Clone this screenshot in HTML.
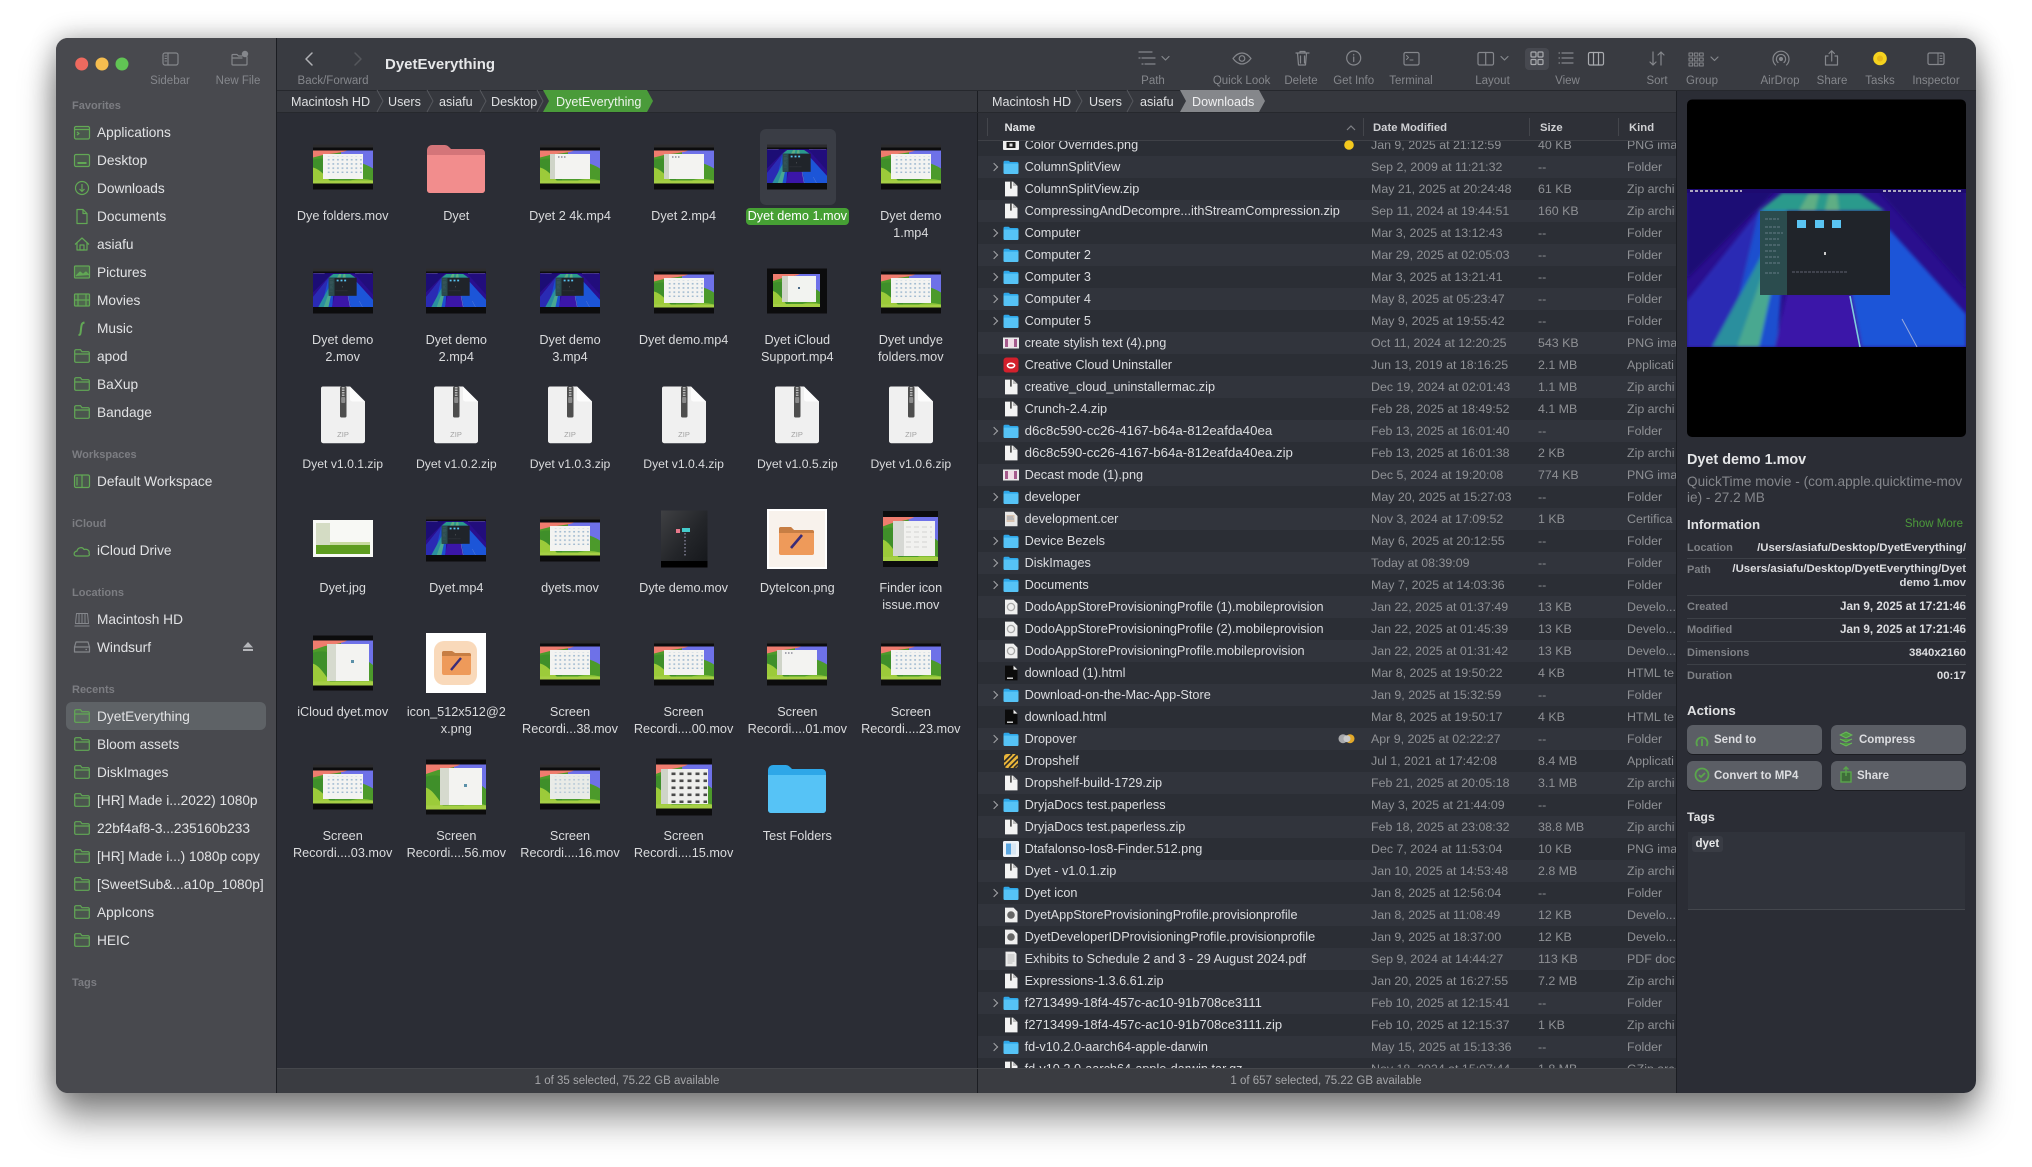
<!DOCTYPE html>
<html><head><meta charset="utf-8"><title>DyetEverything</title>
<style>
html,body{margin:0;padding:0;background:#fff;width:2032px;height:1167px;overflow:hidden;font-family:"Liberation Sans",sans-serif}
#w{position:absolute;left:55.5px;top:37.5px;width:1920.5px;height:1055.5px;overflow:hidden;border-radius:12px;box-shadow:0 26px 36px rgba(0,0,0,.42),0 0 26px rgba(0,0,0,.32)}
#c{position:absolute;left:-55.5px;top:-37.5px;width:2032px;height:1167px;background:#2b2d35}
.a{position:absolute}
.t{position:absolute;white-space:nowrap;line-height:16px;margin-top:1px}
.m{transform:translateX(-50%)}
.s{left:97px;font-size:13.7px;color:#e2e3e5}
.h{left:72px;font-size:11px;font-weight:bold;color:#7c7d82}
.l{font-size:11.5px;color:#85878c}
.p{font-size:12.6px;color:#dfe0e2;top:94px;margin-top:0}
#rows{position:absolute;left:978px;top:140px;width:698px;height:928px;overflow:hidden}
#in{margin-top:-6px}
.r{position:relative;height:22px;background:#2b2e35;font-size:12.7px;line-height:22px;color:#dcdde0;white-space:nowrap}
.r:nth-child(even){background:#31343c}
.r svg{position:absolute;left:25px;top:3px;width:16px;height:16px}
.r em,.r i,.r b,.r u{position:absolute;font-style:normal;font-weight:normal;text-decoration:none;top:0}
.r em{left:46.6px}
.r i{left:393px;font-size:12.4px;color:#8f9195}
.r b{left:560px;font-size:12.4px;color:#8f9195}
.r u{left:649px;font-size:12.4px;color:#8f9195}
.f::before{content:"";position:absolute;left:13px;top:8px;width:5px;height:5px;border-top:1.3px solid #a3a4a8;border-right:1.3px solid #a3a4a8;transform:rotate(45deg)}
.g{position:absolute;width:114px;height:100px;text-align:center}
.g svg{display:block;margin:0 auto;width:60px;height:60px;overflow:visible;filter:blur(.35px)}
.g div{position:absolute;left:0;right:0;top:71.8px;font-size:12.7px;line-height:17px;color:#dadbdd;white-space:nowrap}
.g.zp div{font-size:12.2px}
.ih{font-size:11.3px;font-weight:bold;color:#cfd0d3;top:119px}
.k{left:1687px;font-size:11px;font-weight:bold;color:#7f8186;margin-top:.5px}
.v{right:66px;font-size:11.4px;font-weight:bold;color:#dcdde0;text-align:right;margin-top:.5px}
.dt{font-size:11.7px}
.bt{position:absolute;height:29px;width:135px;background:#5b5e65;border-radius:6px;box-shadow:0 1px 0 rgba(0,0,0,.35)}
.bl{font-size:11.5px;font-weight:bold;color:#dcdde0}
.sep{position:absolute;left:1687px;width:279px;height:1px;background:#3d4047}
</style></head>
<body>
<svg width="0" height="0" style="position:absolute">
<defs>
<filter id="b1" x="-5%" y="-5%" width="110%" height="110%"><feGaussianBlur stdDeviation="1.6"/></filter>
<pattern id="dt" width="4.6" height="4.2" patternUnits="userSpaceOnUse"><rect x="1" y="1" width="1.8" height="1.5" fill="#9db8cf"/></pattern>
<pattern id="dk" width="8" height="7" patternUnits="userSpaceOnUse"><rect x="1.5" y="1.5" width="4" height="2.6" fill="#4a4a4a"/></pattern>
<symbol id="son" viewBox="0 0 60 33" preserveAspectRatio="none">
<rect width="60" height="33" fill="#4c9a2b"/>
<path d="M28 0H60V18C52 13 40 9 28 9z" fill="#6e71e8"/>
<path d="M0 0H34C30 2 20 3 12 4L0 7z" fill="#ef7c6e"/>
<path d="M0 9C8 7 16 8 22 11V33H0z" fill="#3f8f2a"/>
<path d="M0 33V17C8 19 13 27 20 33z" fill="#9ccb3a"/>
<path d="M30 33C40 28 50 27 60 30V33z" fill="#7fbc33"/>
<rect y="30" width="60" height="3" fill="#a6cf45"/>
</symbol>
<symbol id="pur" viewBox="0 0 279 158" preserveAspectRatio="none">
<rect width="279" height="158" fill="#2a0f8e"/>
<g filter="url(#b1)">
<path d="M0 0H90L0 90z" fill="#1f0a74"/><path d="M279 0H190L279 100z" fill="#220b7c"/>
<path d="M95 4H172L198 22H72z" fill="#2b9a8c"/>
<path d="M122 4H132L128 22H112zM142 4H150L152 22H138z" fill="#5fae84"/>
<path d="M0 112L72 22H100L90 158H0z" fill="#1a4fcf"/>
<path d="M0 158V112L72 22L40 158z" fill="#2a2ab4"/>
<path d="M25 158L78 60H96L60 158z" fill="#2a8f9e"/>
<path d="M50 158L76 84H88L72 158z" fill="#48a890"/>
<path d="M88 158L100 105H165L176 158z" fill="#3a12a8"/>
<path d="M202 40L279 125V158H175L165 105z" fill="#1a55d8"/>
</g>
<path d="M163 107L173 158" stroke="#7fd0dc" stroke-width="1.6"/>
<path d="M215 130L230 158" stroke="#9ad" stroke-width="1"/>
<rect x="73" y="22" width="130" height="84" fill="#20242a"/>
<rect x="73" y="22" width="27" height="84" fill="#2b4c4e"/>
<path d="M78 30h14M78 38h16M78 44h18M78 50h14M78 56h16M78 62h12M78 68h14M78 74h16M78 84h14" stroke="#9ab" stroke-width=".8" stroke-dasharray="3 1" opacity=".7"/>
<path d="M105 83h55" stroke="#778" stroke-width=".8" stroke-dasharray="3 1"/>
<path d="M110 31h9v8h-9zM128 31h9v8h-9zM145 31h9v8h-9z" fill="#5ac4f2"/>
<rect x="137" y="63" width="2" height="3" fill="#ccc"/>
<rect width="279" height="4" fill="#1d0a70"/>
<path d="M3 2h52M196 2h80" stroke="#ddd" stroke-width="1.6" stroke-dasharray="3 2"/>
</symbol>
<symbol id="tA" viewBox="0 0 60 60"><rect y="7.5" width="60" height="45" fill="#0c0c0d"/><rect y="7.5" width="60" height="3" fill="#2c2c2e"/><use href="#son" y="13.5" width="60" height="33"/><rect x="10" y="17" width="40" height="25" fill="#f3f3f1"/><rect x="12" y="19" width="37" height="17" fill="url(#dt)"/></symbol>
<symbol id="tB" viewBox="0 0 60 60"><rect y="7.5" width="60" height="45" fill="#0c0c0d"/><rect y="7.5" width="60" height="3" fill="#2c2c2e"/><use href="#son" y="13.5" width="60" height="33"/><rect x="10" y="17" width="40" height="25" fill="#f3f3f1"/><rect x="10" y="17" width="5" height="25" fill="#cfd4c8"/><path d="M18 20h1.5M21 20h1.5M24 20h1.5" stroke="#778" stroke-width="1.2"/></symbol>
<symbol id="tP" viewBox="0 0 60 60"><rect y="7.5" width="60" height="45" fill="#0c0c0d"/><rect y="7.5" width="60" height="3" fill="#2c2c2e"/><use href="#pur" y="12" width="60" height="34"/></symbol>
<symbol id="tI" viewBox="0 0 60 60"><rect y="7.5" width="60" height="45" fill="#0c0c0d"/><use href="#son" x="6" y="13" width="47" height="33"/><rect x="15" y="15" width="34" height="26" fill="#f2f3f0"/><rect x="15" y="15" width="6" height="26" fill="#cfd4c8"/><rect x="31" y="26" width="2" height="2" fill="#4a6a88"/></symbol>
<symbol id="tC" viewBox="0 0 60 60"><rect y="2.5" width="60" height="55" fill="#0c0c0d"/><use href="#son" y="7.5" width="60" height="45"/><rect x="14" y="11" width="42" height="37" fill="#f3f3f1"/><rect x="14" y="11" width="9" height="37" fill="#d6dace"/><rect x="38" y="27" width="3" height="3" fill="#5a90a8"/></symbol>
<symbol id="tJ" viewBox="0 0 60 60"><rect y="11" width="60" height="37" fill="#f8f9f5"/><rect x="3" y="14" width="14" height="28" fill="#d4dcc4"/><rect x="3" y="36" width="54" height="9" fill="#5e9d20"/><rect x="17" y="33" width="40" height="3" fill="#c8dba0"/></symbol>
<symbol id="tD" viewBox="0 0 60 60"><defs><linearGradient id="gd" x1="0" y1="0" x2="1" y2="1"><stop offset="0" stop-color="#3f4043"/><stop offset=".55" stop-color="#232529"/><stop offset="1" stop-color="#14161a"/></linearGradient></defs><rect x="7" y="1.5" width="46.5" height="57" fill="url(#gd)"/><rect x="7" y="52" width="46.5" height="6.5" fill="#000"/><rect x="22" y="20" width="4" height="4" fill="#e8788a"/><rect x="28" y="19" width="8" height="4" fill="#4cc"/><path d="M31 24v24" stroke="#667" stroke-width="2" stroke-dasharray="1.5 2"/></symbol>
<symbol id="tS" viewBox="0 0 60 60"><rect width="60" height="60" fill="#fff"/><rect x="8" y="8" width="43" height="44" rx="10" fill="#f9d9ba"/><path d="M16 20a2 2 0 0 1 2-2h8l3 2h14a2 2 0 0 1 2 2v18a2 2 0 0 1-2 2H18a2 2 0 0 1-2-2z" fill="#ee9a5a"/><path d="M16 23V20a2 2 0 0 1 2-2h8l3 2h14a2 2 0 0 1 2 2v1z" fill="#c77e44"/><path d="M25 37L35 25" stroke="#3a2c78" stroke-width="2.4"/></symbol>
<symbol id="tY" viewBox="0 0 60 60"><rect width="60" height="60" fill="#fff"/><rect x="2" y="2" width="56" height="56" fill="#f8f2ec"/><path d="M12 20a2 2 0 0 1 2-2h10l3 3h18a2 2 0 0 1 2 2v21a2 2 0 0 1-2 2H14a2 2 0 0 1-2-2z" fill="#ee9a5a"/><path d="M12 24V20a2 2 0 0 1 2-2h10l3 3h18a2 2 0 0 1 2 2v1z" fill="#c77e44"/><path d="M24 39L35 26" stroke="#3a2c78" stroke-width="2.6"/></symbol>
<symbol id="tF" viewBox="0 0 60 60"><rect x="2" y="2" width="55" height="56" fill="#0c0c0d"/><use href="#son" x="2" y="8" width="55" height="44"/><rect x="12" y="12" width="42" height="35" fill="#f1f1ef"/><rect x="12" y="12" width="11" height="35" fill="#d6d8d4"/><path d="M25 18h26M25 23h26M25 28h26M25 33h24M25 38h24" stroke="#c8c8c8" stroke-dasharray="5 3" stroke-width=".8"/></symbol>
<symbol id="tG" viewBox="0 0 60 60"><rect x="2" y="1.5" width="56" height="57" fill="#0c0c0d"/><use href="#son" x="2" y="7.5" width="56" height="44"/><rect x="7" y="12" width="47" height="35" fill="#eeeeec"/><rect x="7" y="12" width="7" height="35" fill="#cfd4c8"/><rect x="15" y="14" width="38" height="32" fill="url(#dk)"/></symbol>
<symbol id="tE" viewBox="0 0 60 60"><rect y="7.5" width="60" height="45" fill="#0c0c0d"/><rect y="7.5" width="60" height="3" fill="#2c2c2e"/><use href="#son" y="13.5" width="60" height="33"/><rect x="10" y="17" width="40" height="25" fill="#e9ebe7"/><rect x="12" y="19" width="38" height="17" fill="url(#dt)" opacity=".7"/></symbol>
<symbol id="zip" viewBox="0 0 60 60"><path d="M10 1.5H37L52 16.5V56a2.2 2.2 0 0 1-2.2 2.2H10.2A2.2 2.2 0 0 1 8 56V3.5A2 2 0 0 1 10 1.5z" fill="#f0f0f0"/><path d="M37 1.5V14a2.5 2.5 0 0 0 2.5 2.5H52z" fill="#fcfcfc"/><rect x="27" y="1.5" width="6.5" height="31" rx="1.5" fill="#4e4e4e"/><path d="M30.2 2v16" stroke="#b5b5b5" stroke-width="2.6" stroke-dasharray="1.5 1"/><rect x="28.2" y="12" width="4" height="6" rx="1" fill="#8b8b8b"/><text x="30" y="52" text-anchor="middle" font-family="Liberation Sans,sans-serif" font-size="7.5" fill="#a2a2a2">ZIP</text></symbol>
<symbol id="pf" viewBox="0 0 60 60"><path d="M1 13a5 5 0 0 1 5-5h12c3 0 4 1 6 3l1 1h30a4 4 0 0 1 4 4v37a3 3 0 0 1-3 3H4a3 3 0 0 1-3-3z" fill="#d47579"/><path d="M1 18h58v35a3 3 0 0 1-3 3H4a3 3 0 0 1-3-3z" fill="#f28d8d"/></symbol>
<symbol id="bf" viewBox="0 0 60 60"><path d="M1 13a5 5 0 0 1 5-5h12c3 0 4 1 6 3l1 1h30a4 4 0 0 1 4 4v37a3 3 0 0 1-3 3H4a3 3 0 0 1-3-3z" fill="#2ea7e8"/><path d="M1 18h58v35a3 3 0 0 1-3 3H4a3 3 0 0 1-3-3z" fill="#56c3f6"/></symbol>
<symbol id="lf" viewBox="0 0 16 16"><path d="M.5 3.2A1.5 1.5 0 0 1 2 1.7h3.6l1.6 1.3H14a1.5 1.5 0 0 1 1.5 1.5v9A1.4 1.4 0 0 1 14 15H2a1.4 1.4 0 0 1-1.5-1.5z" fill="#2ea7e8"/><path d="M.5 4.6h15v9A1.4 1.4 0 0 1 14 15H2a1.4 1.4 0 0 1-1.5-1.5z" fill="#56c3f6"/></symbol>
<symbol id="lz" viewBox="0 0 16 16"><path d="M2 .6h8L14.500 5v10.400H2z" fill="#f3f3f3"/><path d="M10 .6V5h4.500z" fill="#bdbdbd"/><rect x="7" y=".6" width="1.800" height="7" fill="#555"/></symbol>
<symbol id="lp" viewBox="0 0 16 16"><rect y="2.500" width="16" height="11" fill="#e9e9e9"/><rect x="2" y="4" width="12" height="8" fill="#a55a8c"/><rect x="5" y="4" width="6" height="8" fill="#f1dde6"/></symbol>
<symbol id="lo" viewBox="0 0 16 16"><rect y="3" width="16" height="10" rx="1" fill="#eee"/><rect x="3.500" y="5" width="9" height="6" fill="#1a1a1a"/><rect x="6.500" y="6.500" width="3" height="3" fill="#ddd"/></symbol>
<symbol id="lc" viewBox="0 0 16 16"><rect x=".5" y=".5" width="15" height="15" rx="3" fill="#d3202c"/><ellipse cx="8" cy="8.500" rx="3.600" ry="2.200" fill="none" stroke="#fff" stroke-width="1.600"/></symbol>
<symbol id="lr" viewBox="0 0 16 16"><path d="M2 .8h8.500L14.500 5v10.200H2z" fill="#e8e8e8"/><rect x="3.500" y="4" width="8" height="7" fill="#d9c3b0"/><path d="M4 6h6M4 8h7" stroke="#9ab" stroke-width="1"/></symbol>
<symbol id="lm" viewBox="0 0 16 16"><path d="M2 .6h8.500L14.500 4.600v10.800H2z" fill="#efefef"/><circle cx="8" cy="8" r="3.600" fill="none" stroke="#a8a8a8" stroke-width="1.300"/></symbol>
<symbol id="ln" viewBox="0 0 16 16"><path d="M2 .6h8.500L14.500 4.600v10.800H2z" fill="#efefef"/><circle cx="8" cy="8" r="3.800" fill="#666"/></symbol>
<symbol id="lh" viewBox="0 0 16 16"><path d="M2 .6h8.500L14.500 4.600v10.800H2z" fill="#0b0b0b"/><path d="M10.500 .6L14.500 4.600h-4z" fill="#eee"/><rect x="4" y="12.500" width="6" height="1.400" fill="#ddd"/></symbol>
<symbol id="ld" viewBox="0 0 16 16"><rect x="1" y="1" width="14" height="14" rx="3" fill="#e9b53a"/><path d="M1 9L9 1M1 14L14 1M6 15L15 6M11 15L15 11" stroke="#2a2a2a" stroke-width="1.600"/></symbol>
<symbol id="lg" viewBox="0 0 16 16"><rect width="16" height="16" rx="1.500" fill="#eef3f7"/><path d="M3 2.500h10v11H3z" fill="#5aa6e0"/><path d="M8 2.500h5v11H8z" fill="#d7e6f2"/></symbol>
<symbol id="lq" viewBox="0 0 16 16"><path d="M2.500 .6h9L13.500 2.600v12.800h-11z" fill="#ececec"/><path d="M4.500 4h7M4.500 6h7M4.500 8h7M4.500 10h7M4.500 12h5" stroke="#aaa" stroke-width=".8"/></symbol>
<g id="fo"><path d="M.7 3V12a1.300 1.300 0 0 0 1.300 1.300h12a1.300 1.300 0 0 0 1.300-1.300V4a1.300 1.300 0 0 0-1.300-1.300H8L6.500 .7H2A1.300 1.300 0 0 0 .7 2zM.7 5h14.600" fill="rgba(95,170,80,.12)" stroke="#62a855" stroke-width="1.200"/></g>
</defs>
</svg>

<div id="w"><div id="c">
<div class="a" style="left:55px;top:37px;width:221px;height:1057px;background:#48494e"></div>
<div class="a" style="left:277px;top:37px;width:1700px;height:53px;background:#393b41"></div>
<div class="a" style="left:277px;top:90px;width:1400px;height:22px;background:#36383e"></div>
<div class="a" style="left:277px;top:1068px;width:701px;height:26px;background:#3a3c41"></div>
<div class="a" style="left:978px;top:1068px;width:698px;height:26px;background:#3a3c41"></div>
<div class="a" style="left:978px;top:112px;width:698px;height:28px;background:#2e3037"></div>

<div id="rows"><div id="in">
<div class="r"><svg><use href="#lo"/></svg><em>Color Overrides.png</em><i>Jan 9, 2025 at 21:12:59</i><b>40 KB</b><u>PNG ima</u></div>
<div class="r f"><svg><use href="#lf"/></svg><em>ColumnSplitView</em><i>Sep 2, 2009 at 11:21:32</i><b>--</b><u>Folder</u></div>
<div class="r"><svg><use href="#lz"/></svg><em>ColumnSplitView.zip</em><i>May 21, 2025 at 20:24:48</i><b>61 KB</b><u>Zip archi</u></div>
<div class="r"><svg><use href="#lz"/></svg><em>CompressingAndDecompre...ithStreamCompression.zip</em><i>Sep 11, 2024 at 19:44:51</i><b>160 KB</b><u>Zip archi</u></div>
<div class="r f"><svg><use href="#lf"/></svg><em>Computer</em><i>Mar 3, 2025 at 13:12:43</i><b>--</b><u>Folder</u></div>
<div class="r f"><svg><use href="#lf"/></svg><em>Computer 2</em><i>Mar 29, 2025 at 02:05:03</i><b>--</b><u>Folder</u></div>
<div class="r f"><svg><use href="#lf"/></svg><em>Computer 3</em><i>Mar 3, 2025 at 13:21:41</i><b>--</b><u>Folder</u></div>
<div class="r f"><svg><use href="#lf"/></svg><em>Computer 4</em><i>May 8, 2025 at 05:23:47</i><b>--</b><u>Folder</u></div>
<div class="r f"><svg><use href="#lf"/></svg><em>Computer 5</em><i>May 9, 2025 at 19:55:42</i><b>--</b><u>Folder</u></div>
<div class="r"><svg><use href="#lp"/></svg><em>create stylish text (4).png</em><i>Oct 11, 2024 at 12:20:25</i><b>543 KB</b><u>PNG ima</u></div>
<div class="r"><svg><use href="#lc"/></svg><em>Creative Cloud Uninstaller</em><i>Jun 13, 2019 at 18:16:25</i><b>2.1 MB</b><u>Applicati</u></div>
<div class="r"><svg><use href="#lz"/></svg><em>creative_cloud_uninstallermac.zip</em><i>Dec 19, 2024 at 02:01:43</i><b>1.1 MB</b><u>Zip archi</u></div>
<div class="r"><svg><use href="#lz"/></svg><em>Crunch-2.4.zip</em><i>Feb 28, 2025 at 18:49:52</i><b>4.1 MB</b><u>Zip archi</u></div>
<div class="r f"><svg><use href="#lf"/></svg><em style="font-size:13.3px">d6c8c590-cc26-4167-b64a-812eafda40ea</em><i>Feb 13, 2025 at 16:01:40</i><b>--</b><u>Folder</u></div>
<div class="r"><svg><use href="#lz"/></svg><em style="font-size:13.3px">d6c8c590-cc26-4167-b64a-812eafda40ea.zip</em><i>Feb 13, 2025 at 16:01:38</i><b>2 KB</b><u>Zip archi</u></div>
<div class="r"><svg><use href="#lp"/></svg><em>Decast mode (1).png</em><i>Dec 5, 2024 at 19:20:08</i><b>774 KB</b><u>PNG ima</u></div>
<div class="r f"><svg><use href="#lf"/></svg><em>developer</em><i>May 20, 2025 at 15:27:03</i><b>--</b><u>Folder</u></div>
<div class="r"><svg><use href="#lr"/></svg><em>development.cer</em><i>Nov 3, 2024 at 17:09:52</i><b>1 KB</b><u>Certifica</u></div>
<div class="r f"><svg><use href="#lf"/></svg><em>Device Bezels</em><i>May 6, 2025 at 20:12:55</i><b>--</b><u>Folder</u></div>
<div class="r f"><svg><use href="#lf"/></svg><em>DiskImages</em><i>Today at 08:39:09</i><b>--</b><u>Folder</u></div>
<div class="r f"><svg><use href="#lf"/></svg><em>Documents</em><i>May 7, 2025 at 14:03:36</i><b>--</b><u>Folder</u></div>
<div class="r"><svg><use href="#lm"/></svg><em>DodoAppStoreProvisioningProfile (1).mobileprovision</em><i>Jan 22, 2025 at 01:37:49</i><b>13 KB</b><u>Develo...</u></div>
<div class="r"><svg><use href="#lm"/></svg><em>DodoAppStoreProvisioningProfile (2).mobileprovision</em><i>Jan 22, 2025 at 01:45:39</i><b>13 KB</b><u>Develo...</u></div>
<div class="r"><svg><use href="#lm"/></svg><em>DodoAppStoreProvisioningProfile.mobileprovision</em><i>Jan 22, 2025 at 01:31:42</i><b>13 KB</b><u>Develo...</u></div>
<div class="r"><svg><use href="#lh"/></svg><em>download (1).html</em><i>Mar 8, 2025 at 19:50:22</i><b>4 KB</b><u>HTML te</u></div>
<div class="r f"><svg><use href="#lf"/></svg><em>Download-on-the-Mac-App-Store</em><i>Jan 9, 2025 at 15:32:59</i><b>--</b><u>Folder</u></div>
<div class="r"><svg><use href="#lh"/></svg><em>download.html</em><i>Mar 8, 2025 at 19:50:17</i><b>4 KB</b><u>HTML te</u></div>
<div class="r f"><svg><use href="#lf"/></svg><em>Dropover</em><i>Apr 9, 2025 at 02:22:27</i><b>--</b><u>Folder</u></div>
<div class="r"><svg><use href="#ld"/></svg><em>Dropshelf</em><i>Jul 1, 2021 at 17:42:08</i><b>8.4 MB</b><u>Applicati</u></div>
<div class="r"><svg><use href="#lz"/></svg><em>Dropshelf-build-1729.zip</em><i>Feb 21, 2025 at 20:05:18</i><b>3.1 MB</b><u>Zip archi</u></div>
<div class="r f"><svg><use href="#lf"/></svg><em>DryjaDocs test.paperless</em><i>May 3, 2025 at 21:44:09</i><b>--</b><u>Folder</u></div>
<div class="r"><svg><use href="#lz"/></svg><em>DryjaDocs test.paperless.zip</em><i>Feb 18, 2025 at 23:08:32</i><b>38.8 MB</b><u>Zip archi</u></div>
<div class="r"><svg><use href="#lg"/></svg><em>Dtafalonso-Ios8-Finder.512.png</em><i>Dec 7, 2024 at 11:53:04</i><b>10 KB</b><u>PNG ima</u></div>
<div class="r"><svg><use href="#lz"/></svg><em>Dyet - v1.0.1.zip</em><i>Jan 10, 2025 at 14:53:48</i><b>2.8 MB</b><u>Zip archi</u></div>
<div class="r f"><svg><use href="#lf"/></svg><em>Dyet icon</em><i>Jan 8, 2025 at 12:56:04</i><b>--</b><u>Folder</u></div>
<div class="r"><svg><use href="#ln"/></svg><em>DyetAppStoreProvisioningProfile.provisionprofile</em><i>Jan 8, 2025 at 11:08:49</i><b>12 KB</b><u>Develo...</u></div>
<div class="r"><svg><use href="#ln"/></svg><em>DyetDeveloperIDProvisioningProfile.provisionprofile</em><i>Jan 9, 2025 at 18:37:00</i><b>12 KB</b><u>Develo...</u></div>
<div class="r"><svg><use href="#lq"/></svg><em>Exhibits to Schedule 2 and 3 - 29 August 2024.pdf</em><i>Sep 9, 2024 at 14:44:27</i><b>113 KB</b><u>PDF doc</u></div>
<div class="r"><svg><use href="#lz"/></svg><em>Expressions-1.3.6.61.zip</em><i>Jan 20, 2025 at 16:27:55</i><b>7.2 MB</b><u>Zip archi</u></div>
<div class="r f"><svg><use href="#lf"/></svg><em style="font-size:13px">f2713499-18f4-457c-ac10-91b708ce3111</em><i>Feb 10, 2025 at 12:15:41</i><b>--</b><u>Folder</u></div>
<div class="r"><svg><use href="#lz"/></svg><em style="font-size:13px">f2713499-18f4-457c-ac10-91b708ce3111.zip</em><i>Feb 10, 2025 at 12:15:37</i><b>1 KB</b><u>Zip archi</u></div>
<div class="r f"><svg><use href="#lf"/></svg><em>fd-v10.2.0-aarch64-apple-darwin</em><i>May 15, 2025 at 15:13:36</i><b>--</b><u>Folder</u></div>
<div class="r"><svg><use href="#lz"/></svg><em>fd-v10.2.0-aarch64-apple-darwin.tar.gz</em><i>Nov 18, 2024 at 15:07:44</i><b>1.8 MB</b><u>GZip arc</u></div>
</div></div>

<div class="a" style="left:66px;top:702px;width:200px;height:28px;background:#5e6266;border-radius:6px"></div>
<div class="a" style="left:760px;top:129px;width:76px;height:76px;background:#3a3d45;border-radius:6px"></div>
<div class="a" style="left:746px;top:208px;width:103px;height:17px;background:#46a034;border-radius:4px"></div>

<svg class="a" style="left:0;top:0" width="2032" height="1167" viewBox="0 0 2032 1167" fill="none">
<path d="M276.5 37V1094" stroke="#1b1d22"/>
<path d="M977.5 90V1094" stroke="#1b1d22"/>
<path d="M1676.5 90V1094" stroke="#1b1d22"/>
<path d="M277 90.5H1976" stroke="#26282d"/>
<path d="M277 112.5H1676" stroke="#26282d"/>
<path d="M978 140.5H1676" stroke="#3f4147"/>
<path d="M277 1068.5H1676" stroke="#45474c"/>
<path d="M987.5 118V136M1363.5 118V136M1529.5 118V136M1618.5 118V136" stroke="#44464c"/>
<path d="M1347 130l4-4 4 4" stroke="#7f8186" stroke-width="1.2"/>
<path d="M377 90l6 11-6 11M427 90l6 11-6 11M480 90l6 11-6 11M537 90l6 11-6 11" stroke="#55575d"/>
<path d="M1076 90l6 11-6 11M1127 90l6 11-6 11" stroke="#55575d"/>
<path d="M543 90H647L653 101L647 112H543L549 101Z" fill="#4a9b3a"/>
<path d="M1180 90H1259L1265 101L1259 112H1180L1186 101Z" fill="#85878b"/>
<circle cx="81.7" cy="64" r="6.5" fill="#ee6a5f"/><circle cx="102" cy="64" r="6.5" fill="#f5bd4f"/><circle cx="122" cy="64" r="6.5" fill="#61c454"/>
<g stroke="#85878c" stroke-width="1.2" stroke-linecap="round" stroke-linejoin="round">
<rect x="163" y="53" width="15" height="12" rx="2"/><path d="M168 53V65"/><path d="M165 56h1.5M165 58.5h1.5M165 61h1.5" stroke-width="1"/>
<path d="M232 55.5V64a1 1 0 0 0 1 1h13a1 1 0 0 0 1-1V57M232 55.5a1 1 0 0 1 1-1h4l1.5 1.5H242M232 58H242"/><circle cx="245" cy="54" r="3.2" fill="#85878c" stroke="none"/>
<path d="M312 53l-6 6 6 6" stroke="#b0b1b5" stroke-width="1.5"/>
<path d="M355 53l6 6-6 6" stroke="#55575c" stroke-width="1.5"/>
<path d="M1139 52h13M1142 58h13M1145 64h10"/><path d="M1139 58h1M1142 64h1"/>
<path d="M1162 56.5l3.5 3.5 3.5-3.5"/>
<path d="M1233 58.5c3-4 6-5.5 9-5.5s6 1.5 9 5.5c-3 4-6 5.5-9 5.5s-6-1.5-9-5.5z"/><circle cx="1242" cy="58.5" r="2.8"/>
<path d="M1296 53h13M1300 53v-1.5h5V53M1297.5 53l1 12h7l1-12M1300.5 56v7M1304.5 56v7"/>
<circle cx="1353.7" cy="58" r="7"/><path d="M1353.7 57v4.5M1353.7 54.5v.5"/>
<rect x="1404" y="52.5" width="15" height="12.5" rx="1.5"/><path d="M1406.5 55.5l2 2-2 2M1410 60h3" stroke-width="1"/>
<rect x="1478" y="52.5" width="15.5" height="12.5" rx="1.5"/><path d="M1485.7 52.5V65"/><path d="M1501 56.5l3.5 3.5 3.5-3.5"/>
</g>
<rect x="1525" y="48" width="24" height="22" rx="4" fill="#474950"/>
<g stroke="#a9abaf" stroke-width="1.2"><rect x="1531" y="52" width="5" height="5" rx="1"/><rect x="1538" y="52" width="5" height="5" rx="1"/><rect x="1531" y="59.5" width="5" height="5" rx="1"/><rect x="1538" y="59.5" width="5" height="5" rx="1"/></g>
<g stroke="#85878c" stroke-width="1.2" stroke-linecap="round" stroke-linejoin="round">
<path d="M1562 53h11M1562 58h11M1562 63h11M1559 53h.5M1559 58h.5M1559 63h.5"/>
<rect x="1588.5" y="52.5" width="15" height="12.5" rx="1.5" stroke="#a9abaf"/><path d="M1593.5 52.5V65M1598.5 52.5V65" stroke="#a9abaf"/>
<path d="M1653 52V65M1650 62l3 3 3-3M1661 65V52M1658 55l3-3 3 3"/>
<g stroke-width="1"><rect x="1689" y="53" width="3.6" height="3"/><rect x="1694.3" y="53" width="3.6" height="3"/><rect x="1699.6" y="53" width="3.6" height="3"/><rect x="1689" y="58" width="3.6" height="3"/><rect x="1694.3" y="58" width="3.6" height="3"/><rect x="1699.6" y="58" width="3.6" height="3"/><rect x="1689" y="63" width="3.6" height="3"/><rect x="1694.3" y="63" width="3.6" height="3"/><rect x="1699.6" y="63" width="3.6" height="3"/></g>
<path d="M1711 57l3.5 3.5 3.5-3.5"/>
<path d="M1775.5 65a8 8 0 1 1 11 0M1778 62.5a4.6 4.6 0 1 1 6 0"/><circle cx="1781" cy="59" r="1.5" fill="#85878c"/>
<path d="M1828 56h-2.5v9h12v-9H1835M1831.7 61V51M1829 53.5l2.7-2.7 2.7 2.7"/>
<rect x="1928" y="53" width="16" height="11.5" rx="1.5"/><path d="M1938 53v11.5M1940 56h2M1940 58.5h2M1940 61h2" stroke-width="1"/>
</g>
<circle cx="1880" cy="58.5" r="6.8" fill="#f6d31f"/><circle cx="1880" cy="58.5" r="3" fill="#e8b917"/>
<g stroke="#62a855" stroke-width="1.2" stroke-linejoin="round">
<rect x="74.5" y="126.5" width="15" height="12.5" rx="1.5" fill="rgba(95,170,80,.15)"/><path d="M74.5 129.5h15M77 132l2 1.5-2 1.5"/>
<rect x="74.5" y="154.5" width="15" height="12" rx="1.5" fill="rgba(95,170,80,.15)"/><path d="M77.5 163h9" stroke-width="2"/>
<circle cx="82" cy="188" r="6.5"/><path d="M82 184v7M79.5 189l2.5 2.5 2.500-2.500"/>
<path d="M77 209.5h6l4 4v10h-10zM83 209.5v4h4"/>
<path d="M75 244.5l7-6.5 7 6.5M77 243v7h10v-7"/><rect x="80" y="245" width="4" height="5"/>
<rect x="74.5" y="266" width="15" height="12" rx="1" fill="rgba(95,170,80,.35)"/><path d="M76 276l4-4 3 2.5 3-2.5 3 3" fill="#62a855"/>
<rect x="74.5" y="294" width="15" height="12" rx="1" fill="rgba(95,170,80,.3)"/><path d="M78 294v12M86 294v12M74.5 300h15"/>
<path d="M78.5 335c2 0 2-1 2.5-6 .5-4 .5-6 3.5-6.500" stroke-width="2"/>
</g>
<use href="#fo" x="74" y="349"/><use href="#fo" x="74" y="377"/><use href="#fo" x="74" y="405"/>
<g stroke="#62a855" stroke-width="1.2" stroke-linejoin="round">
<rect x="74.5" y="475" width="15" height="12.5" rx="1.5" fill="rgba(95,170,80,.15)"/><path d="M82 475v12.5M77 477v8.5"/>
<path d="M76.5 556c-3 0-3.5-4 .5-5 .5-3 5-5 7-1.5 3-1 6 1 5 4 1 1.5 0 2.5-1.500 2.500z"/>
</g>
<g stroke="#85878c" stroke-width="1.2" stroke-linejoin="round">
<path d="M76.5 613.5h11l1 10h-13zM74.5 626h15M79 613.5v10M82 613.5v10M85 613.5v10" stroke-width="1"/>
<path d="M76 642l-1.5 5v5h15v-5L88 642zM74.5 647h15M85.5 649.5h1.5"/>
</g>
<path d="M248 642l5 5.5h-10z" fill="#b5b6ba"/><rect x="243" y="649" width="10" height="2" fill="#b5b6ba"/>
<use href="#fo" x="74" y="709"/><use href="#fo" x="74" y="737"/><use href="#fo" x="74" y="765"/><use href="#fo" x="74" y="793"/><use href="#fo" x="74" y="821"/><use href="#fo" x="74" y="849"/><use href="#fo" x="74" y="877"/><use href="#fo" x="74" y="905"/><use href="#fo" x="74" y="933"/>
<circle cx="1349" cy="145" r="4.8" fill="#f4c91e"/>
<circle cx="1343" cy="738.7" r="4.5" fill="#a8a9ac"/><circle cx="1350" cy="738.7" r="4.5" fill="#e2a92a"/><circle cx="1347" cy="738.7" r="3.5" fill="#c9c9c9"/>
<rect x="1687" y="99.5" width="279" height="337.5" rx="5" fill="#000"/>
<use href="#pur" x="1687" y="189" width="279" height="158"/>
</svg>

<div class="sep" style="top:558px"></div><div class="sep" style="top:595px"></div><div class="sep" style="top:618px"></div><div class="sep" style="top:641px"></div><div class="sep" style="top:664px"></div>
<div class="bt" style="left:1687px;top:725px"></div><div class="bt" style="left:1831px;top:725px"></div>
<div class="bt" style="left:1687px;top:761px"></div><div class="bt" style="left:1831px;top:761px"></div>
<svg class="a" style="left:1695px;top:731px" width="14" height="18" fill="none" stroke="#5aa64c" stroke-width="1.8"><path d="M2.500 15a5.500 5.500 0 1 1 9 0M7 8v7"/></svg>
<svg class="a" style="left:1839px;top:731px" width="14" height="18" fill="#4f9a42" stroke="#69b85a" stroke-width="1"><path d="M7 1l6 3-6 3-6-3zM1 8l6 3 6-3M1 12l6 3 6-3"/></svg>
<svg class="a" style="left:1694px;top:767px" width="16" height="16" fill="none" stroke="#5aa64c" stroke-width="1.8"><circle cx="8" cy="8" r="6.5"/><path d="M5 8l2 2 4-4"/></svg>
<svg class="a" style="left:1839px;top:766px" width="14" height="18" fill="#3f6d3a" stroke="#5aa64c" stroke-width="1.4"><rect x="2" y="6" width="10" height="10"/><path d="M7 10V1M4.500 3.500L7 1l2.500 2.500" fill="none"/></svg>
<div class="a" style="left:1688px;top:832px;width:277px;height:77px;background:#30333b;border-bottom:1.5px solid #44474d"></div>
<div class="a" style="left:1692px;top:836px;width:31px;height:16px;background:#393c44;border-radius:3px"></div>

<div class="t l m" style="left:170px;top:72px">Sidebar</div>
<div class="t l m" style="left:238px;top:72px">New File</div>
<div class="t l m" style="left:333px;top:72px">Back/Forward</div>
<div class="t" style="left:385px;top:56px;font-size:15px;font-weight:bold;color:#e6e7e9">DyetEverything</div>
<div class="t l m" style="left:1153px;top:72px">Path</div>
<div class="t l m" style="left:1241.6px;top:72px">Quick Look</div>
<div class="t l m" style="left:1301px;top:72px">Delete</div>
<div class="t l m" style="left:1353.7px;top:72px">Get Info</div>
<div class="t l m" style="left:1411px;top:72px">Terminal</div>
<div class="t l m" style="left:1492.5px;top:72px">Layout</div>
<div class="t l m" style="left:1567.5px;top:72px">View</div>
<div class="t l m" style="left:1657px;top:72px">Sort</div>
<div class="t l m" style="left:1702px;top:72px">Group</div>
<div class="t l m" style="left:1780px;top:72px">AirDrop</div>
<div class="t l m" style="left:1832px;top:72px">Share</div>
<div class="t l m" style="left:1880px;top:72px">Tasks</div>
<div class="t l m" style="left:1936px;top:72px">Inspector</div>

<div class="t p" style="left:291px">Macintosh HD</div><div class="t p" style="left:388px">Users</div><div class="t p" style="left:439px">asiafu</div><div class="t p" style="left:491px">Desktop</div><div class="t p" style="left:556px;color:#eef5ec">DyetEverything</div>
<div class="t p" style="left:992px">Macintosh HD</div><div class="t p" style="left:1089px">Users</div><div class="t p" style="left:1140px">asiafu</div><div class="t p" style="left:1192px;color:#f0f0f1">Downloads</div>

<div class="t ih" style="left:1004.5px;color:#e3e4e6">Name</div><div class="t ih" style="left:1373px">Date Modified</div><div class="t ih" style="left:1540px">Size</div><div class="t ih" style="left:1629px">Kind</div>

<div class="t h" style="top:97px">Favorites</div>
<div class="t s" style="top:124px">Applications</div><div class="t s" style="top:152px">Desktop</div><div class="t s" style="top:180px">Downloads</div><div class="t s" style="top:208px">Documents</div><div class="t s" style="top:236px">asiafu</div><div class="t s" style="top:264px">Pictures</div><div class="t s" style="top:292px">Movies</div><div class="t s" style="top:320px">Music</div><div class="t s" style="top:348px">apod</div><div class="t s" style="top:376px">BaXup</div><div class="t s" style="top:404px">Bandage</div>
<div class="t h" style="top:446px">Workspaces</div><div class="t s" style="top:473px">Default Workspace</div>
<div class="t h" style="top:515px">iCloud</div><div class="t s" style="top:542px">iCloud Drive</div>
<div class="t h" style="top:584px">Locations</div><div class="t s" style="top:611px">Macintosh HD</div><div class="t s" style="top:639px">Windsurf</div>
<div class="t h" style="top:681px">Recents</div>
<div class="t s" style="top:708px">DyetEverything</div><div class="t s" style="top:736px">Bloom assets</div><div class="t s" style="top:764px">DiskImages</div><div class="t s" style="top:792px">[HR] Made i...2022) 1080p</div><div class="t s" style="top:820px">22bf4af8-3...235160b233</div><div class="t s" style="top:848px">[HR] Made i...) 1080p copy</div><div class="t s" style="top:876px">[SweetSub&amp;...a10p_1080p]</div><div class="t s" style="top:904px">AppIcons</div><div class="t s" style="top:932px">HEIC</div>
<div class="t h" style="top:974px">Tags</div>

<div class="g" style="left:285.7px;top:136.7px"><svg><use href="#tA"/></svg><div>Dye folders.mov</div></div>
<div class="g" style="left:399.3px;top:136.7px"><svg><use href="#pf"/></svg><div>Dyet</div></div>
<div class="g" style="left:513px;top:136.7px"><svg><use href="#tB"/></svg><div>Dyet 2 4k.mp4</div></div>
<div class="g" style="left:626.6px;top:136.7px"><svg><use href="#tB"/></svg><div>Dyet 2.mp4</div></div>
<div class="g" style="left:740.3px;top:136.7px"><svg><use href="#tP"/></svg><div style="color:#fff">Dyet demo 1.mov</div></div>
<div class="g" style="left:853.8px;top:136.7px"><svg><use href="#tA"/></svg><div>Dyet demo<br>1.mp4</div></div>
<div class="g" style="left:285.7px;top:260.7px"><svg><use href="#tP"/></svg><div>Dyet demo<br>2.mov</div></div>
<div class="g" style="left:399.3px;top:260.7px"><svg><use href="#tP"/></svg><div>Dyet demo<br>2.mp4</div></div>
<div class="g" style="left:513px;top:260.7px"><svg><use href="#tP"/></svg><div>Dyet demo<br>3.mp4</div></div>
<div class="g" style="left:626.6px;top:260.7px"><svg><use href="#tA"/></svg><div>Dyet demo.mp4</div></div>
<div class="g" style="left:740.3px;top:260.7px"><svg><use href="#tI"/></svg><div>Dyet iCloud<br>Support.mp4</div></div>
<div class="g" style="left:853.8px;top:260.7px"><svg><use href="#tA"/></svg><div>Dyet undye<br>folders.mov</div></div>
<div class="g zp" style="left:285.7px;top:384.7px"><svg><use href="#zip"/></svg><div>Dyet v1.0.1.zip</div></div>
<div class="g zp" style="left:399.3px;top:384.7px"><svg><use href="#zip"/></svg><div>Dyet v1.0.2.zip</div></div>
<div class="g zp" style="left:513px;top:384.7px"><svg><use href="#zip"/></svg><div>Dyet v1.0.3.zip</div></div>
<div class="g zp" style="left:626.6px;top:384.7px"><svg><use href="#zip"/></svg><div>Dyet v1.0.4.zip</div></div>
<div class="g zp" style="left:740.3px;top:384.7px"><svg><use href="#zip"/></svg><div>Dyet v1.0.5.zip</div></div>
<div class="g zp" style="left:853.8px;top:384.7px"><svg><use href="#zip"/></svg><div>Dyet v1.0.6.zip</div></div>
<div class="g" style="left:285.7px;top:508.7px"><svg><use href="#tJ"/></svg><div>Dyet.jpg</div></div>
<div class="g" style="left:399.3px;top:508.7px"><svg><use href="#tP"/></svg><div>Dyet.mp4</div></div>
<div class="g" style="left:513px;top:508.7px"><svg><use href="#tA"/></svg><div>dyets.mov</div></div>
<div class="g" style="left:626.6px;top:508.7px"><svg><use href="#tD"/></svg><div>Dyte demo.mov</div></div>
<div class="g" style="left:740.3px;top:508.7px"><svg><use href="#tY"/></svg><div>DyteIcon.png</div></div>
<div class="g" style="left:853.8px;top:508.7px"><svg><use href="#tF"/></svg><div>Finder icon<br>issue.mov</div></div>
<div class="g" style="left:285.7px;top:632.7px"><svg><use href="#tC"/></svg><div>iCloud dyet.mov</div></div>
<div class="g" style="left:399.3px;top:632.7px"><svg><use href="#tS"/></svg><div>icon_512x512@2<br>x.png</div></div>
<div class="g" style="left:513px;top:632.7px"><svg><use href="#tA"/></svg><div>Screen<br>Recordi...38.mov</div></div>
<div class="g" style="left:626.6px;top:632.7px"><svg><use href="#tA"/></svg><div>Screen<br>Recordi....00.mov</div></div>
<div class="g" style="left:740.3px;top:632.7px"><svg><use href="#tB"/></svg><div>Screen<br>Recordi....01.mov</div></div>
<div class="g" style="left:853.8px;top:632.7px"><svg><use href="#tA"/></svg><div>Screen<br>Recordi....23.mov</div></div>
<div class="g" style="left:285.7px;top:756.7px"><svg><use href="#tA"/></svg><div>Screen<br>Recordi....03.mov</div></div>
<div class="g" style="left:399.3px;top:756.7px"><svg><use href="#tC"/></svg><div>Screen<br>Recordi....56.mov</div></div>
<div class="g" style="left:513px;top:756.7px"><svg><use href="#tE"/></svg><div>Screen<br>Recordi....16.mov</div></div>
<div class="g" style="left:626.6px;top:756.7px"><svg><use href="#tG"/></svg><div>Screen<br>Recordi....15.mov</div></div>
<div class="g" style="left:740.3px;top:756.7px"><svg><use href="#bf"/></svg><div>Test Folders</div></div>

<div class="t m" style="left:627px;top:1072px;font-size:11.5px;color:#a6a7aa">1 of 35 selected, 75.22 GB available</div>
<div class="t m" style="left:1326px;top:1072px;font-size:11.5px;color:#a6a7aa">1 of 657 selected, 75.22 GB available</div>

<div class="t" style="left:1687px;top:451px;font-size:14.4px;font-weight:bold;color:#e4e5e7">Dyet demo 1.mov</div>
<div class="t" style="left:1687px;top:473px;font-size:13.6px;color:#85878c">QuickTime movie - (com.apple.quicktime-mov</div>
<div class="t" style="left:1687px;top:489px;font-size:13.6px;color:#85878c">ie) - 27.2 MB</div>
<div class="t" style="left:1687px;top:516px;font-size:13.3px;font-weight:bold;color:#dfe0e2">Information</div>
<div class="t" style="right:69px;top:516px;font-size:11.5px;color:#4c9a3b;margin-top:0">Show More</div>
<div class="t k" style="top:539px">Location</div><div class="t v" style="top:539px">/Users/asiafu/Desktop/DyetEverything/</div>
<div class="t k" style="top:561.5px">Path</div><div class="t v" style="top:561.5px;line-height:14px">/Users/asiafu/Desktop/DyetEverything/Dyet<br>demo 1.mov</div>
<div class="t k" style="top:598.5px">Created</div><div class="t v dt" style="top:598.5px">Jan 9, 2025 at 17:21:46</div>
<div class="t k" style="top:621.5px">Modified</div><div class="t v dt" style="top:621.5px">Jan 9, 2025 at 17:21:46</div>
<div class="t k" style="top:644.5px">Dimensions</div><div class="t v" style="top:644.5px">3840x2160</div>
<div class="t k" style="top:667.7px">Duration</div><div class="t v" style="top:667.7px">00:17</div>
<div class="t" style="left:1687px;top:702px;font-size:13.3px;font-weight:bold;color:#dfe0e2">Actions</div>
<div class="t bl" style="left:1714px;top:731px">Send to</div><div class="t bl" style="left:1859px;top:731px">Compress</div>
<div class="t bl" style="left:1714px;top:767px">Convert to MP4</div><div class="t bl" style="left:1857px;top:767px">Share</div>
<div class="t" style="left:1687px;top:809px;font-size:12.3px;font-weight:bold;color:#dfe0e2;margin-top:0">Tags</div>
<div class="t" style="left:1695.5px;top:836px;font-size:11.5px;font-weight:bold;color:#e8e9ea;margin-top:0">dyet</div>
</div></div>
</body></html>
